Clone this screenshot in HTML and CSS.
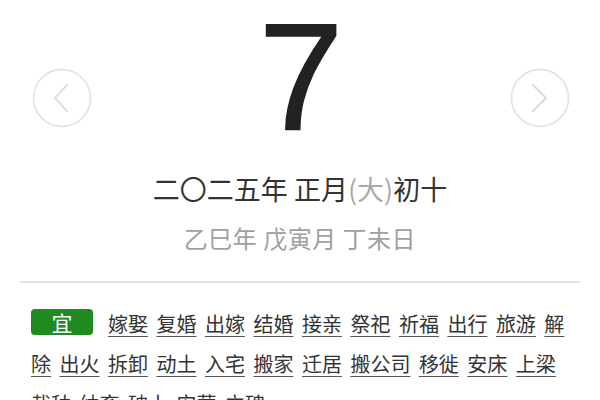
FILE: index.html
```html
<!DOCTYPE html>
<html lang="zh-CN">
<head>
<meta charset="utf-8">
<title>万年历</title>
<link rel="stylesheet" href="styles.css">
</head>
<body>
<div class="top">
  <div class="nav">
    <svg width="60" height="60" viewBox="0 0 60 60"><circle cx="30" cy="30" r="28.5" fill="none" stroke="#e4e4e4" stroke-width="1.8"/><polyline points="35,17 23,30 35,43" fill="none" stroke="#d9d9d9" stroke-width="1.8" stroke-linecap="round" stroke-linejoin="round"/></svg>
  </div>
  <div class="day">7</div>
  <div class="nav">
    <svg width="60" height="60" viewBox="0 0 60 60"><circle cx="30" cy="30" r="28.5" fill="none" stroke="#e4e4e4" stroke-width="1.8"/><polyline points="23,17 36,30 23,43" fill="none" stroke="#d9d9d9" stroke-width="1.8" stroke-linecap="round" stroke-linejoin="round"/></svg>
  </div>
</div>
<div class="lunar">二〇二五年 正月<span class="big">(大)</span>初十</div>
<div class="ganzhi">乙巳年 戊寅月 丁未日</div>
<div class="sep"></div>
<div class="yi"><span class="badge">宜</span><a>嫁娶</a> <a>复婚</a> <a>出嫁</a> <a>结婚</a> <a>接亲</a> <a>祭祀</a> <a>祈福</a> <a>出行</a> <a>旅游</a> <a>解除</a> <a>出火</a> <a>拆卸</a> <a>动土</a> <a>入宅</a> <a>搬家</a> <a>迁居</a> <a>搬公司</a> <a>移徙</a> <a>安床</a> <a>上梁</a> <a>栽种</a> <a>纳畜</a> <a>破土</a> <a>安葬</a> <a>立碑</a></div>
</body>
</html>
```
FILE: styles.css
```css
html, body {
  margin: 0;
  padding: 0;
  background: #fff;
}
body {
  width: 600px;
  height: 400px;
  overflow: hidden;
  font-family: "Noto Sans CJK SC", "Noto Sans", sans-serif;
  color: #333;
}
.top {
  display: flex;
  justify-content: space-between;
  align-items: flex-start;
  padding: 0 30px 0 32px;
  height: 152px;
}
.nav {
  width: 60px;
  height: 60px;
  margin-top: 68px;
}
.nav svg {
  display: block;
}
.day {
  font-family: "Liberation Sans", Arial, sans-serif;
  font-size: 152px;
  line-height: 152px;
  color: #222;
  -webkit-text-stroke: 1.5px #222;
}
.lunar {
  margin-top: 22px;
  text-align: center;
  font-size: 27px;
  line-height: 30px;
  color: #333;
}
.lunar .big {
  color: #aaa;
}
.ganzhi {
  margin-top: 19px;
  text-align: center;
  font-size: 24px;
  letter-spacing: 0.5px;
  line-height: 30px;
  color: #a0a0a0;
}
.sep {
  margin: 28px 20px 0;
  height: 0;
  border-top: 2px solid #e2e2e2;
}
.yi {
  margin: 0 24px 0 31px;
  padding-top: 21px;
  font-size: 20px;
  line-height: 40px;
  word-spacing: 4px;
  color: #333;
}
.yi a {
  color: #333;
  text-decoration: underline;
  text-decoration-color: #555;
  text-underline-offset: 4px;
  text-decoration-thickness: 1px;
}
.badge {
  display: inline-block;
  width: 62px;
  height: 26px;
  line-height: 26px;
  margin-right: 15px;
  vertical-align: 1px;
  background: #1f8a1f;
  color: #fff;
  border-radius: 4px;
  text-align: center;
  font-size: 21px;
  word-spacing: 0;
}
```
